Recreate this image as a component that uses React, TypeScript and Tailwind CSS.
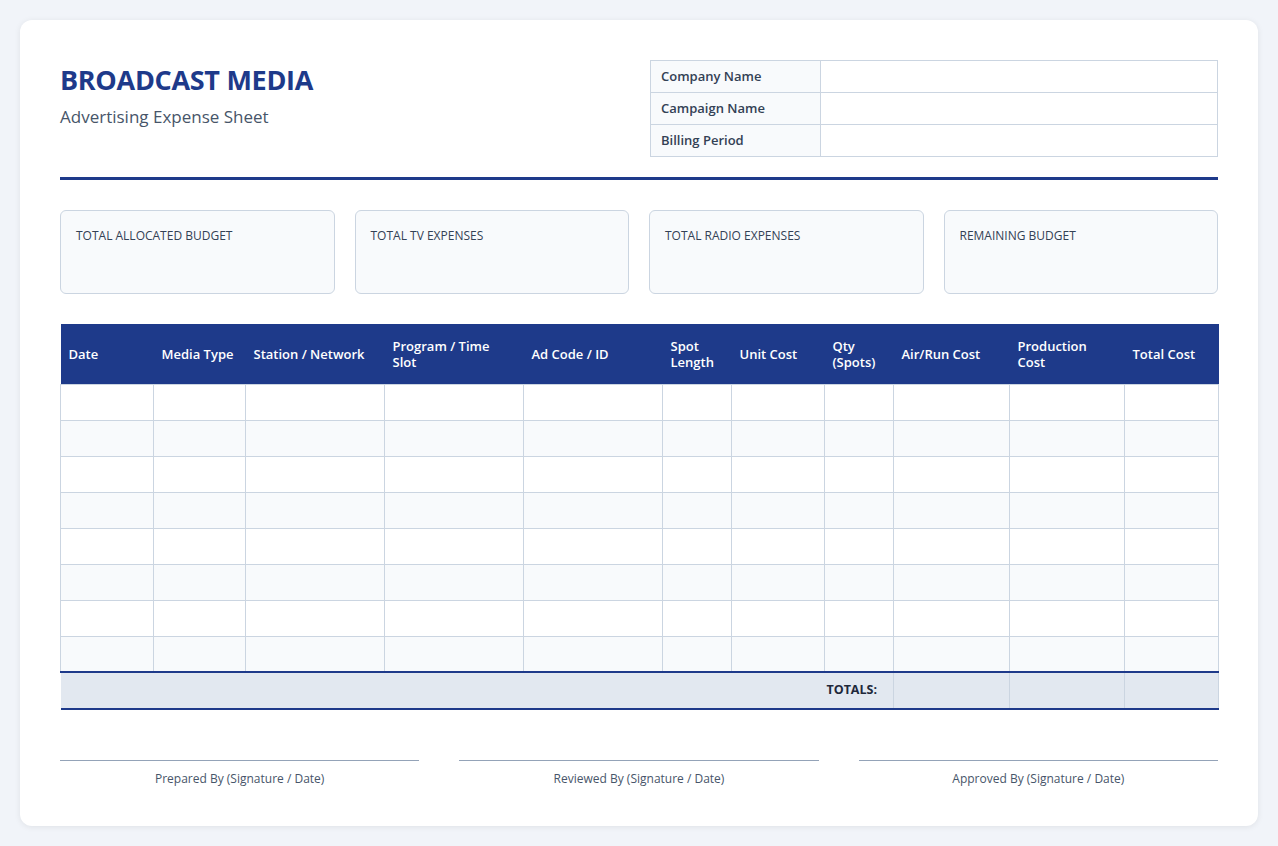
export default function App() {
  const cols: [string, number][] = [
    ["Date", 93], ["Media Type", 92], ["Station / Network", 139], ["Program / Time Slot", 139],
    ["Ad Code / ID", 139], ["Spot Length", 69], ["Unit Cost", 93], ["Qty (Spots)", 69],
    ["Air/Run Cost", 116], ["Production Cost", 115], ["Total Cost", 94],
  ];
  const rows = Array.from({ length: 8 });
  return (
    <div className="min-h-[846px] bg-[#f1f4f9] p-5" style={{ fontFamily: '"Open Sans", sans-serif' }}>
      <div className="bg-white rounded-xl shadow-[0_1px_6px_rgba(0,0,0,0.08)] px-10 pt-10 pb-[38px]">
        <div className="flex justify-between">
          <div className="pt-[3px]">
            <h1 className="text-[27px] leading-[34px] font-bold text-[#1e3a8a] tracking-[-0.3px]">BROADCAST MEDIA</h1>
            <p className="mt-[7px] text-[17px] text-[#475569]">Advertising Expense Sheet</p>
          </div>
          <table className="w-[568px] border-collapse text-[13px] mt-[0px]">
            <tbody>
              {["Company Name", "Campaign Name", "Billing Period"].map((l) => (
                <tr key={l} className="h-[32px]">
                  <td className="w-[170px] border border-[#cbd5e1] bg-[#f8fafc] px-[10px] font-semibold text-[#334155]">{l}</td>
                  <td className="border border-[#cbd5e1]"></td>
                </tr>
              ))}
            </tbody>
          </table>
        </div>
        <div className="mt-5 h-[3px] bg-[#1e3a8a]" />
        <div className="mt-[30px] grid grid-cols-4 gap-5">
          {["TOTAL ALLOCATED BUDGET", "TOTAL TV EXPENSES", "TOTAL RADIO EXPENSES", "REMAINING BUDGET"].map((t) => (
            <div key={t} className="h-[84px] rounded-md border border-[#cbd5e1] bg-[#f8fafc] px-[15px] pt-[16px] text-[12px] text-[#334155]">{t}</div>
          ))}
        </div>
        <table className="mt-[30px] w-full border-collapse table-fixed text-[13px]">
          <colgroup>
            {cols.map(([n, w]) => <col key={n} style={{ width: w }} />)}
          </colgroup>
          <thead>
            <tr className="h-[60px] bg-[#1e3a8a] text-white">
              {cols.map(([n]) => (
                <th key={n} className="text-left font-semibold px-2 leading-[16px]">
                  {n === "Spot Length" ? <>Spot<br />Length</> : n === "Qty (Spots)" ? <>Qty<br />(Spots)</> : n}
                </th>
              ))}
            </tr>
          </thead>
          <tbody>
            {rows.map((_, i) => (
              <tr key={i} className={`h-[36px] ${i % 2 ? "bg-[#f8fafc]" : "bg-white"}`}>
                {cols.map(([n]) => <td key={n} className="border border-[#cbd5e1]"></td>)}
              </tr>
            ))}
            <tr className="h-[37px] bg-[#e2e8f0] border-t-2 border-b-2 border-t-[#1e3a8a] border-b-[#1e3a8a]">
              <td colSpan={8} className="text-right pr-4 font-bold text-[#1e293b] text-[12.5px]">TOTALS:</td>
              <td className="border-l border-r border-[#cbd5e1]"></td>
              <td className="border-l border-r border-[#cbd5e1]"></td>
              <td className="border-l border-r border-[#cbd5e1]"></td>
            </tr>
          </tbody>
        </table>
        <div className="mt-[50px] grid grid-cols-3 gap-10">
          {["Prepared By (Signature / Date)", "Reviewed By (Signature / Date)", "Approved By (Signature / Date)"].map((s) => (
            <div key={s} className="border-t border-[#94a3b8] pt-[9px] text-center text-[12px] text-[#475569]">{s}</div>
          ))}
        </div>
      </div>
    </div>
  );
}
